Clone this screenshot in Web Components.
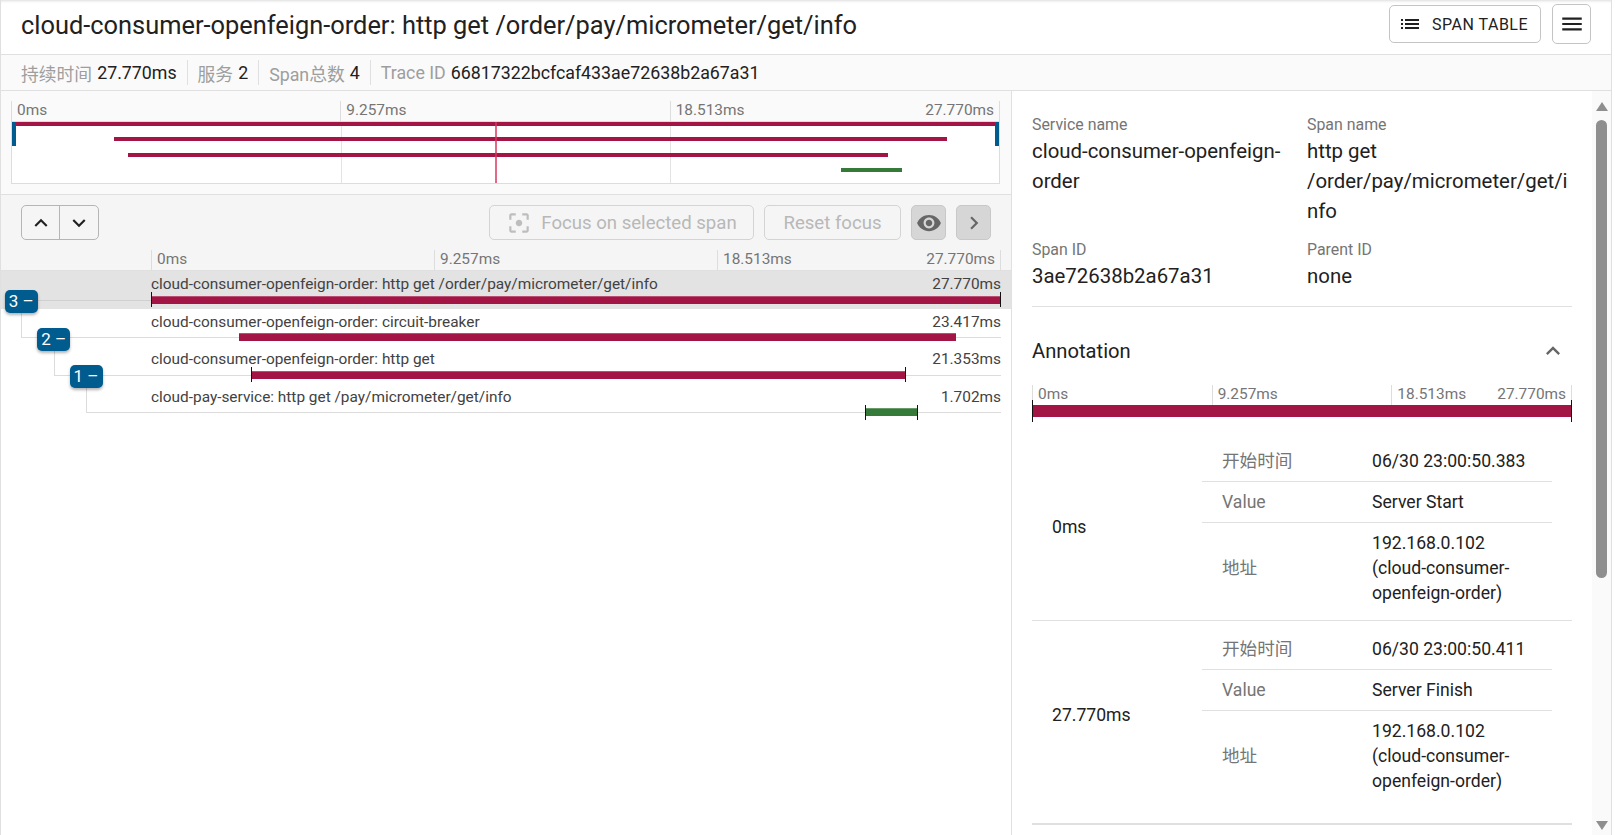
<!DOCTYPE html>
<html lang="en">
<head>
<meta charset="utf-8">
<title>Trace</title>
<style>
  html, body { margin: 0; height: 100%; overflow: hidden; background: #fff; }
  body { font-family: Roboto, "Noto Sans CJK SC", sans-serif; color: #212121; }
</style>
</head>
<body>
<trace-page>
  <trace-header slot="header">cloud-consumer-openfeign-order: http get /order/pay/micrometer/get/info</trace-header>
  <trace-info slot="info">
    <info-item label="持续时间">27.770ms</info-item>
    <info-item label="服务">2</info-item>
    <info-item label="Span总数">4</info-item>
    <info-item label="Trace ID">66817322bcfcaf433ae72638b2a67a31</info-item>
  </trace-info>
  <trace-overview slot="left"></trace-overview>
  <trace-toolbar slot="left"></trace-toolbar>
  <span-timeline slot="left">
    <span-row selected badge="3" level="0" start="151" end="1001" color="#a31545" ticks="both" duration="27.770ms">cloud-consumer-openfeign-order: http get /order/pay/micrometer/get/info</span-row>
    <span-row badge="2" level="1" start="239" end="956" color="#a31545" duration="23.417ms">cloud-consumer-openfeign-order: circuit-breaker</span-row>
    <span-row badge="1" level="2" start="251" end="906" color="#a31545" ticks="both" duration="21.353ms">cloud-consumer-openfeign-order: http get</span-row>
    <span-row level="3" start="865" end="918" color="#357a38" ticks="both" duration="1.702ms">cloud-pay-service: http get /pay/micrometer/get/info</span-row>
  </span-timeline>
  <span-detail slot="right">
    <kv-item label="Service name">cloud-consumer-openfeign-order</kv-item>
    <kv-item label="Span name">http get /order/pay/micrometer/get/info</kv-item>
    <kv-item label="Span ID">3ae72638b2a67a31</kv-item>
    <kv-item label="Parent ID">none</kv-item>
    <annotation-group slot="annotations" time="0ms" start="06/30 23:00:50.383" value="Server Start"></annotation-group>
    <annotation-group slot="annotations" time="27.770ms" start="06/30 23:00:50.411" value="Server Finish" last></annotation-group>
  </span-detail>
  <fake-scrollbar slot="scroll"></fake-scrollbar>
</trace-page>

<script>
const ICONS = {
  up: "M12 8l-6 6 1.41 1.41L12 10.83l4.59 4.58L18 14z",
  down: "M16.59 8.59 12 13.17 7.41 8.59 6 10l6 6 6-6z",
  right: "M10 6 8.59 7.41 13.17 12l-4.58 4.59L10 18l6-6z",
  eye: "M12 4.5C7 4.5 2.73 7.61 1 12c1.73 4.39 6 7.5 11 7.5s9.27-3.11 11-7.5c-1.73-4.39-6-7.5-11-7.5zM12 17c-2.76 0-5-2.24-5-5s2.24-5 5-5 5 2.24 5 5-2.24 5-5 5zm0-8c-1.66 0-3 1.34-3 3s1.34 3 3 3 3-1.34 3-3-1.34-3-3-3z",
  menu: "M3 18h18v-2H3v2zm0-5h18v-2H3v2zm0-7v2h18V6H3z",
  list: "M3 13h2v-2H3v2zm0 4h2v-2H3v2zm0-8h2V7H3v2zm4 4h14v-2H7v2zm0 4h14v-2H7v2zM7 7v2h14V7H7z",
  focus: "M5 15H3v4c0 1.1.9 2 2 2h4v-2H5v-4zM5 5h4V3H5c-1.1 0-2 .9-2 2v4h2V5zm14-2h-4v2h4v4h2V5c0-1.1-.9-2-2-2zm0 16h-4v2h4c1.1 0 2-.9 2-2v-4h-2v4zM12 9c-1.66 0-3 1.34-3 3s1.34 3 3 3 3-1.34 3-3-1.34-3-3-3z",
};

function icon(name, size, color) {
  return `<svg width="${size}" height="${size}" viewBox="0 0 24 24" fill="${color}" style="display:block;flex:none"><path d="${ICONS[name]}"/></svg>`;
}

class BaseElement extends HTMLElement {
  constructor() {
    super();
    this.attachShadow({ mode: "open" });
  }
}

class TracePage extends BaseElement {
  constructor() {
    super();
    this.shadowRoot.innerHTML = `
      <style>
        :host {
          display: flex;
          flex-direction: column;
          width: 1610px;
          height: 835px;
          border-left: 1px solid #e0e0e0;
          border-right: 1px solid #e0e0e0;
          overflow: hidden;
          font-family: Roboto, "Noto Sans CJK SC", sans-serif;
          color: #212121;
        }
        .main { display: flex; flex: 1; min-height: 0; }
        .left {
          width: 1010px;
          flex: none;
          display: flex;
          flex-direction: column;
          border-right: 1px solid #e0e0e0;
        }
        .right { flex: 1; min-width: 0; overflow: hidden; }
      </style>
      <slot name="header"></slot>
      <slot name="info"></slot>
      <div class="main">
        <div class="left"><slot name="left"></slot></div>
        <div class="right"><slot name="right"></slot></div>
        <slot name="scroll"></slot>
      </div>
    `;
  }
}

class TraceHeader extends BaseElement {
  constructor() {
    super();
    this.shadowRoot.innerHTML = `
      <style>
        :host {
          display: flex;
          align-items: center;
          justify-content: space-between;
          box-sizing: border-box;
          height: 55px;
          padding: 0 20px 6px 20px;
          border-bottom: 1px solid #e0e0e0;
          box-shadow: inset 0 3px 3px -2px rgba(0,0,0,.14);
          background: #fff;
        }
        .title { font-size: 25.4px; line-height: 34px; white-space: nowrap; margin-top: 2px; }
        .actions { display: flex; align-items: center; gap: 11px; }
        button {
          display: flex;
          align-items: center;
          font: inherit;
          color: #212121;
          background: #fff;
          border: 1px solid #c4c4c4;
          border-radius: 5px;
          padding: 0;
        }
        .table {
          width: 152px;
          height: 38px;
          justify-content: flex-start;
          padding-left: 8px;
          font-size: 16px;
          letter-spacing: .5px;
          gap: 10px;
        }
        .menu { width: 39px; height: 40px; justify-content: center; }
      </style>
      <div class="title"><slot></slot></div>
      <div class="actions">
        <button class="table">${icon("list", 24, "#212121")}SPAN TABLE</button>
        <button class="menu">${icon("menu", 26, "#212121")}</button>
      </div>
    `;
  }
}

class TraceInfo extends BaseElement {
  constructor() {
    super();
    this.shadowRoot.innerHTML = `
      <style>
        :host {
          display: flex;
          align-items: center;
          box-sizing: border-box;
          height: 36px;
          padding-left: 20px;
          background: #fafafa;
          border-bottom: 1px solid #e0e0e0;
        }
      </style>
      <slot></slot>
    `;
  }
}

class InfoItem extends BaseElement {
  constructor() {
    super();
    this.shadowRoot.innerHTML = `
      <style>
        :host {
          display: flex;
          align-items: center;
          height: 25px;
          gap: 5px;
          padding-right: 10px;
          margin-right: 10px;
          border-right: 1px solid #e0e0e0;
          font-size: 17.8px;
          white-space: nowrap;
        }
        :host(:last-child) { border-right: 0; }
        .label { color: #9e9e9e; }
      </style>
      <span class="label">${this.getAttribute("label")}</span>
      <span><slot></slot></span>
    `;
  }
}

class TimeRuler extends BaseElement {
  constructor() {
    super();
    this.shadowRoot.innerHTML = `
      <style>
        :host {
          display: grid;
          grid-template-columns: 1fr 1fr 1fr;
          box-sizing: border-box;
          height: 20px;
          border-right: 1px solid #ddd;
          font-size: 15.4px;
          line-height: 18px;
          color: #757575;
          white-space: nowrap;
        }
        div { border-left: 1px solid #ddd; padding: 0 5px; }
        .last { display: flex; justify-content: space-between; }
      </style>
      <div>0ms</div>
      <div>9.257ms</div>
      <div class="last"><span>18.513ms</span><span>27.770ms</span></div>
    `;
  }
}

class TraceOverview extends BaseElement {
  constructor() {
    super();
    const bars = [
      [12, 997, 0, "#a31545"],
      [114, 947, 15, "#a31545"],
      [128, 888, 31, "#a31545"],
      [841, 902, 46, "#357a38"],
    ];
    this.shadowRoot.innerHTML = `
      <style>
        :host {
          display: block;
          box-sizing: border-box;
          height: 104px;
          padding: 10px 11px 0 10px;
          background: #fafafa;
          border-bottom: 1px solid #e0e0e0;
        }
        .canvas {
          position: relative;
          height: 61px;
          background: #fff;
          border: 1px solid #ddd;
        }
        .canvas i { position: absolute; display: block; }
        .grid { top: 0; bottom: 0; width: 1px; background: #e3e3e3; }
        .bar { height: 3.5px; }
        .handle { top: 0; width: 4px; height: 24px; background: #005b8f; }
        .cursor { top: 0; bottom: 0; left: 483px; width: 1.5px; background: rgba(214,56,92,.75); }
      </style>
      <time-ruler></time-ruler>
      <div class="canvas">
        <i class="grid" style="left:329px"></i>
        <i class="grid" style="left:658px"></i>
        ${bars.map(([a, b, y, c]) => `<i class="bar" style="left:${a - 12}px;width:${b - a}px;top:${y}px;background:${c}"></i>`).join("")}
        <i class="cursor"></i>
        <i class="handle" style="left:0"></i>
        <i class="handle" style="right:0"></i>
      </div>
    `;
  }
}

class ToolButton extends BaseElement {
  constructor() {
    super();
    this.shadowRoot.innerHTML = `
      <style>
        :host {
          display: flex;
          align-items: center;
          justify-content: center;
          box-sizing: border-box;
          height: 35px;
          border: 1px solid #d4d4d4;
          border-radius: 5px;
          font-size: 18.6px;
          color: #b8b8b8;
          white-space: nowrap;
        }
        :host([solid]) { background: #d6d6d6; border-color: #c8c8c8; color: #666; }
      </style>
      <slot></slot>
    `;
  }
}

class TraceToolbar extends BaseElement {
  constructor() {
    super();
    this.shadowRoot.innerHTML = `
      <style>
        :host {
          display: block;
          background: #f5f5f5;
          border-bottom: 1px solid #e0e0e0;
          padding: 10px 10px 0 0;
          height: 76px;
          box-sizing: border-box;
        }
        .bar {
          display: flex;
          align-items: center;
          height: 35px;
          margin: 0 10px 10px 20px;
        }
        .nav {
          display: flex;
          width: 78px;
          height: 35px;
          box-sizing: border-box;
          border: 1px solid #b5b5b5;
          border-radius: 5px;
          margin-right: auto;
        }
        .nav span { flex: 1; display: flex; align-items: center; justify-content: center; }
        .nav span:first-child { flex: none; width: 37px; }
        .nav span + span { border-left: 1px solid #b5b5b5; }
        tool-button { margin-left: 10px; }
        .focus { width: 265px; gap: 9px; }
        .reset { width: 137px; }
        .square { width: 35px; }
        time-ruler { margin-left: 150px; }
      </style>
      <div class="bar">
        <div class="nav"><span>${icon("up", 26, "#212121")}</span><span>${icon("down", 26, "#212121")}</span></div>
        <tool-button class="focus">${icon("focus", 26, "#bdbdbd")}Focus on selected span</tool-button>
        <tool-button class="reset">Reset focus</tool-button>
        <tool-button class="square" solid>${icon("eye", 26, "#666")}</tool-button>
        <tool-button class="square" solid>${icon("right", 26, "#666")}</tool-button>
      </div>
      <time-ruler></time-ruler>
    `;
  }
}

class SpanTimeline extends BaseElement {
  constructor() {
    super();
    this.shadowRoot.innerHTML = `
      <style>
        :host { display: block; flex: 1; background: #fff; }
      </style>
      <slot></slot>
    `;
  }
}

class SpanRow extends BaseElement {
  constructor() {
    super();
    const level = parseInt(this.getAttribute("level"));
    const start = parseInt(this.getAttribute("start")) - 1;
    const end = parseInt(this.getAttribute("end")) - 1;
    const badge = this.getAttribute("badge");
    const ticks = this.getAttribute("ticks");
    const connector = level == 0
      ? `<i class="conn" style="left:36px;top:28.5px;height:0;border-left:0"></i>`
      : `<i class="conn" style="left:${20 + 32.6 * (level - 1)}px;top:4.5px;height:24px"></i>`;
    this.shadowRoot.innerHTML = `
      <style>
        :host {
          display: block;
          position: relative;
          height: 37.5px;
          box-sizing: border-box;
          padding: 3px 10px 0 150px;
          font-size: 15.4px;
          line-height: 20px;
          color: #424242;
        }
        :host([selected]) { background: #e3e3e3; }
        .text { display: flex; justify-content: space-between; white-space: nowrap; }
        i { position: absolute; display: block; }
        .conn {
          right: 10px;
          border-left: 1px solid #dcdcdc;
          border-bottom: 1px solid #dcdcdc;
        }
        :host([selected]) .conn { border-color: #d0d0d0; }
        .bar { top: 24.5px; height: 8px; box-shadow: inset 0 1px 0 rgba(255,255,255,.25); }
        .tick { top: 21px; height: 15px; width: 1px; background: #111; }
        .badge {
          position: absolute;
          z-index: 2;
          left: ${3.7 + 32.4 * level}px;
          top: 19px;
          width: 33px;
          height: 23px;
          border-radius: 5px;
          background: #005b8f;
          box-shadow: 0 2px 3px rgba(0,0,0,.3);
          color: #fff;
          font-size: 17px;
          line-height: 23px;
          text-align: center;
          white-space: pre;
        }
      </style>
      <div class="text"><span><slot></slot></span><span>${this.getAttribute("duration")}</span></div>
      ${connector}
      <i class="bar" style="left:${start}px;width:${end - start}px;background:${this.getAttribute("color")}"></i>
      ${ticks ? `<i class="tick" style="left:${start}px"></i><i class="tick" style="left:${end - 1}px"></i>` : ""}
      ${badge ? `<div class="badge">${badge} –</div>` : ""}
    `;
  }
}

class KvItem extends BaseElement {
  constructor() {
    super();
    this.shadowRoot.innerHTML = `
      <style>
        :host { display: block; min-width: 0; }
        .label { font-size: 15.9px; line-height: 20px; color: #757575; }
        .value {
          font-size: 20.4px;
          line-height: 30px;
          margin-top: 1px;
          overflow-wrap: anywhere;
        }
      </style>
      <div class="label">${this.getAttribute("label")}</div>
      <div class="value"><slot></slot></div>
    `;
  }
}

class SpanDetail extends BaseElement {
  constructor() {
    super();
    this.shadowRoot.innerHTML = `
      <style>
        :host {
          display: block;
          box-sizing: border-box;
          padding: 24px 20px 0 20px;
        }
        .kv {
          display: grid;
          grid-template-columns: 275px 264px;
          row-gap: 14px;
          padding-bottom: 15px;
          border-bottom: 1px solid #e0e0e0;
        }
        .head {
          display: flex;
          align-items: center;
          justify-content: space-between;
          height: 30px;
          margin-top: 29px;
          padding-right: 5px;
          font-size: 20.2px;
        }
        time-ruler { margin-top: 19px; }
        .bar {
          position: relative;
          height: 12px;
          background: #a31545;
          margin-bottom: 15px;
        }
        .bar i { position: absolute; top: -5px; bottom: -5px; width: 1px; background: #111; }
      </style>
      <div class="kv"><slot></slot></div>
      <div class="head"><span>Annotation</span>${icon("up", 28, "#666")}</div>
      <time-ruler></time-ruler>
      <div class="bar"><i style="left:0"></i><i style="right:0"></i></div>
      <slot name="annotations"></slot>
    `;
  }
}

class AnnotationGroup extends BaseElement {
  constructor() {
    super();
    const rows = [
      ["开始时间", this.getAttribute("start")],
      ["Value", this.getAttribute("value")],
      ["地址", "192.168.0.102<br>(cloud-consumer-openfeign-order)"],
    ];
    this.shadowRoot.innerHTML = `
      <style>
        :host {
          display: grid;
          grid-template-columns: 170px 350px;
          align-items: center;
          box-sizing: border-box;
          padding: 9px 0 6px 0;
          border-bottom: 1px solid #e0e0e0;
          font-size: 17.6px;
          line-height: 25px;
        }
        :host([last]) { padding: 8px 0 21px 0; border-bottom-width: 2px; }
        .time { padding-left: 20px; }
        .row {
          display: grid;
          grid-template-columns: 170px 1fr;
          align-items: center;
          padding: 7.5px 0;
          border-bottom: 1px solid #e0e0e0;
        }
        .row:last-child { border-bottom: 0; padding: 8px 0; }
        .row span:first-child { padding-left: 20px; color: #757575; }
      </style>
      <div class="time">${this.getAttribute("time")}</div>
      <div>
        ${rows.map(([k, v]) => `<div class="row"><span>${k}</span><span>${v}</span></div>`).join("")}
      </div>
    `;
  }
}

class FakeScrollbar extends BaseElement {
  constructor() {
    super();
    this.shadowRoot.innerHTML = `
      <style>
        :host {
          display: flex;
          flex-direction: column;
          align-items: center;
          flex: none;
          box-sizing: border-box;
          width: 19px;
          padding: 11px 0 5px 0;
          background: #fafafa;
        }
        .up, .down { width: 0; height: 0; border-left: 6px solid transparent; border-right: 6px solid transparent; }
        .up { border-bottom: 9px solid #8f8f8f; }
        .down { border-top: 9px solid #8f8f8f; margin-top: auto; }
        .thumb { width: 11px; height: 458px; margin-top: 9px; border-radius: 6px; background: #8f8f8f; }
      </style>
      <div class="up"></div>
      <div class="thumb"></div>
      <div class="down"></div>
    `;
  }
}

customElements.define("trace-page", TracePage);
customElements.define("trace-header", TraceHeader);
customElements.define("trace-info", TraceInfo);
customElements.define("info-item", InfoItem);
customElements.define("time-ruler", TimeRuler);
customElements.define("trace-overview", TraceOverview);
customElements.define("tool-button", ToolButton);
customElements.define("trace-toolbar", TraceToolbar);
customElements.define("span-timeline", SpanTimeline);
customElements.define("span-row", SpanRow);
customElements.define("kv-item", KvItem);
customElements.define("span-detail", SpanDetail);
customElements.define("annotation-group", AnnotationGroup);
customElements.define("fake-scrollbar", FakeScrollbar);
</script>
</body>
</html>
